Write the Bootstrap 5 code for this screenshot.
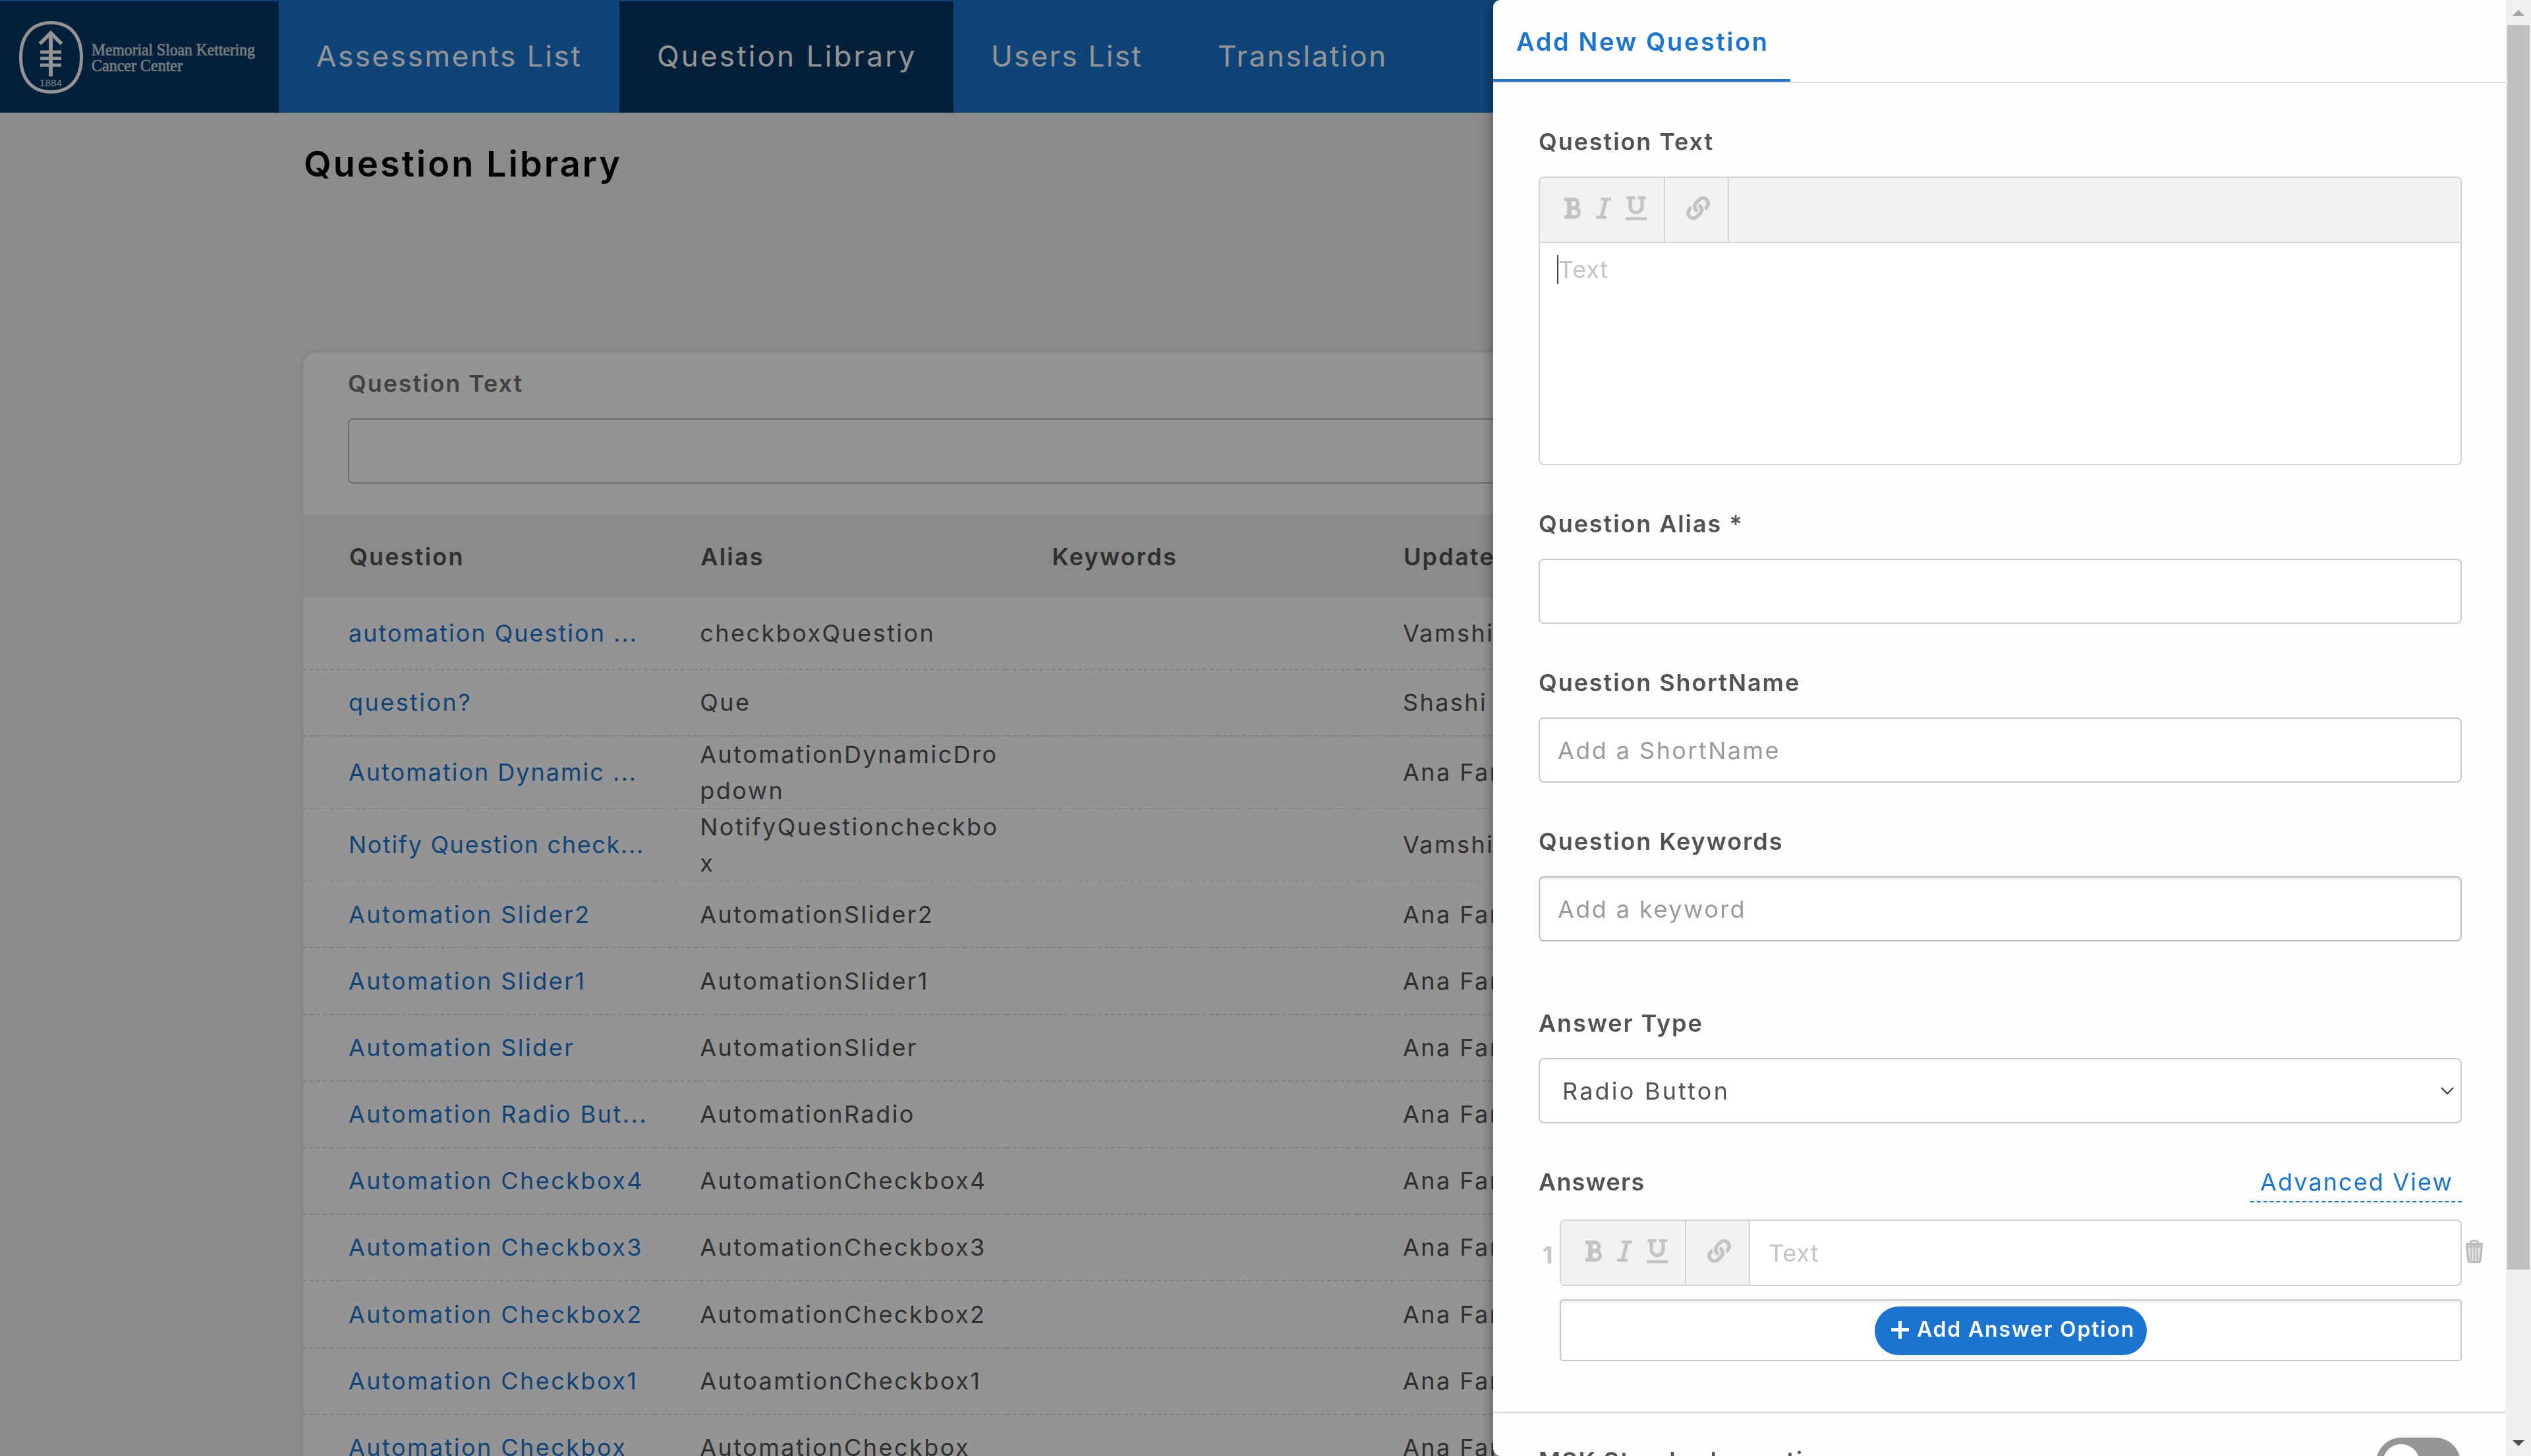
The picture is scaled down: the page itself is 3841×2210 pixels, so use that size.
<!DOCTYPE html>
<html lang="en">
<head>
<meta charset="utf-8">
<title>Question Library</title>
<link href="https://cdn.jsdelivr.net/npm/bootstrap@5.3.0/dist/css/bootstrap.min.css" rel="stylesheet">
<style>
  html, body { height: 100%; }
  body { font-family: Inter, "Open Sans", sans-serif; font-size: 36px; line-height: 54px; letter-spacing: 2.45px; color: #525252; background: #f0f0f0; overflow: hidden; }
  a { color: #1b75d0; text-decoration: none; }

  .topbar { height: 171px; background: #1b75d0; padding: 2px 0 0; }
  .topbar .brand-box { width: 423px; background: #053863; }
  .topbar .nav-link { font-size: 44px; letter-spacing: 2.6px; color: #fff; padding: 0 0 3px 57px; display: flex; align-items: center; white-space: nowrap; }
  .topbar .nav-link.active { background: #053863; letter-spacing: 3.15px; }
  .w-assess { width: 517px; } .w-question { width: 507px; } .w-users { width: 344px; }
  .topbar .nav-link.w-users { letter-spacing: 2.3px; }

  .page-title { font-size: 54px; line-height: 64px; font-weight: 600; letter-spacing: 3.1px; color: #000; margin: 46px 0 0 461px; }
  .library { margin: 254px 0 0 460px; width: 2920px; border: 0; border-radius: 20px; overflow: hidden; box-shadow: 0 0 8px rgba(0,0,0,.12); }
  .library .filter { height: 246px; padding: 20px 68px 0; }
  .library .filter .form-label { color: #727272; }
  .library .form-control { border-color: #bebebe; }
  .qrow { display: grid; grid-template-columns: repeat(4, 533.3px); height: 101.2px; background: #fff; }
  .qrow > div { display: flex; align-items: center; padding-left: 69px; border-bottom: 2px dashed #dbdbdb; white-space: nowrap; line-height: 54.5px; }
  .qrow.tall { height: 110px; }
  .qrow.qhead { height: 126px; background: #f0f0f0; font-weight: 600; letter-spacing: 2.2px; }
  .qrow.qhead > div { border: 0; padding-left: 70px; padding-top: 2px; }
  .cut { letter-spacing: 2px; }
  .cut-long { letter-spacing: 1.65px; }

  .form-label { display: block; font-weight: 600; letter-spacing: 1.9px; margin: 0 0 26px; color: #525252; }
  .form-control, .form-select { height: 99px; border: 2px solid #cacaca; border-radius: 8px; font-size: 36px; letter-spacing: 2.45px; padding: 0 27px; color: #525252; background-color: #fff; }
  .form-control::placeholder { color: #9a9a9a; opacity: 1; }
  .form-select { padding: 0 34px; letter-spacing: 3.2px;
    background-image: url("data:image/svg+xml,%3Csvg xmlns='http://www.w3.org/2000/svg' viewBox='0 0 20 12'%3E%3Cpath d='M1 1l9 9 9-9' fill='none' stroke='%23444' stroke-width='2.4'/%3E%3C/svg%3E");
    background-size: 20px 12px; background-position: right 10px center; }
  .field { margin-bottom: 62px; }
  .field-wide { margin-bottom: 97px; }
  .inset { border-color: #bdbdbd; box-shadow: inset 0 2px 4px rgba(0,0,0,.09); }

  .offcanvas-backdrop.show { opacity: .42; }
  .offcanvas.drawer { width: 1575px; border: 0; flex-direction: row; background: #fefefe; border-radius: 11px 0 0 12px; overflow: hidden; box-shadow: 0 0 22px rgba(0,0,0,.45); color: #525252; transition: none; }
  .drawer-main { width: 1537px; }
  .drawer-head { height: 126px; border-bottom: 2px solid #dcdcdc; }
  .drawer-tab { width: 451px; height: 124px; border-bottom: 4px solid #1b75d0; color: #1b75d0; font-size: 38px; font-weight: 600; letter-spacing: 2.6px; padding: 0 0 0 35px; line-height: 126px; white-space: nowrap; }
  .drawer-body { padding: 62px 67px 0 69px; height: 2019px; border-bottom: 2px solid #d8d8d8; }

  .editor { border: 2px solid #d4d4cc; border-radius: 8px; overflow: hidden; background: #fff; color: #c3c3c3; }
  .editor .tools { background: #f1f1f1; }
  .tools .tool-set { width: 190px; border-right: 2px solid #d4d4cc; padding: 0 0 5px 37px; }
  .tools .tool-link { width: 97px; padding-left: 32px; }
  .tools svg { flex: none; display: block; }
  .gap-i { margin-left: 22px; }
  .editor-big .tools { height: 99px; border-bottom: 2px solid #d4d4cc; }
  .editor-big { height: 438px; }
  .typing { margin: 18px 0 0 26px; height: 44px; line-height: 44px; border-left: 2px solid #444; letter-spacing: .8px; width: max-content; }
  .editor-line { height: 101px; width: 1369px; flex: none; }
  .editor-line .hint { padding-left: 28px; letter-spacing: .9px; }
  .adv-row { margin-bottom: 26px; }
  .adv-row .form-label { margin: 0; letter-spacing: 1.2px; }
  .adv-link { border-bottom: 2px dashed #1b75d0; height: 58px; padding: 0 13px 0 15px; letter-spacing: 2.1px; }
  .idx { width: 32px; padding: 6px 0 0 6px; color: #c4c4c4; font-weight: 700; letter-spacing: 0; }
  .trash { margin: 0 0 4px 5px; }
  .add-box { height: 94px; margin: 20px 0 0 32px; border: 2px solid #cacaca; border-radius: 5px; box-shadow: inset 0 2px 4px rgba(0,0,0,.1); padding: 9px 0 0 476px; background: #fff; }
  .btn-add { width: 413px; height: 74px; border-radius: 37px; background: #1b75d0; color: #fff; font-size: 32px; font-weight: 600; letter-spacing: 1.8px; padding: 0 0 4px 25px; border: 0; gap: 12px; white-space: nowrap; }
  .drawer-foot { padding: 45px 69px 0 69px; }
  .drawer-foot .form-label { margin-bottom: 0; }
  .switch-off { width: 128px; height: 76px; margin-top: -8px; border-radius: 38px; background: #969696; padding: 10px; }
  .switch-off i { display: block; width: 56px; height: 56px; border-radius: 50%; background: #fff; }

  .rail { width: 38px; background: #f0f0f0; padding: 15px 2px 0; }
  .rail .thumb { height: 1889px; margin: 14px 0 259px; background: #c1c1c1; }
  .rail svg { display: block; margin-left: 8px; }
</style>
</head>
<body>
<svg class="d-none" xmlns="http://www.w3.org/2000/svg">
  <symbol id="ic-bold" viewBox="0 0 26 32"><g fill="none" stroke="#c3c3c3" stroke-width="5.4"><path d="M0 2.7H14.5a5.9 5.9 0 0 1 0 12.4H8"/><path d="M8 16.1h7.8a6.6 6.6 0 0 1 0 13.2H0"/><path d="M7.4 2V30" stroke-width="7"/></g></symbol>
  <symbol id="ic-italic" viewBox="0 0 23 32"><g fill="none" stroke="#c3c3c3"><path d="M7.5 2.3H23M0 29.7H16" stroke-width="4.6"/><path d="M15.2 2.5L8.3 29.5" stroke-width="5.2"/></g></symbol>
  <symbol id="ic-underline" viewBox="0 0 32 37"><g fill="none" stroke="#c3c3c3"><path d="M1.5 2.3H14.5M18.5 2.3H31M0 34H32" stroke-width="4.6"/><path d="M7 2V15.5a9 9 0 0 0 18 0V2" stroke-width="5.4"/></g></symbol>
  <symbol id="ic-link" viewBox="0 0 512 512"><path fill="#c3c3c3" d="M326.612 185.391c59.747 59.809 58.927 155.698.36 214.59-.11.12-.24.25-.36.37l-67.2 67.2c-59.27 59.27-155.699 59.262-214.96 0-59.27-59.26-59.27-155.7 0-214.96l37.106-37.106c9.84-9.84 26.786-3.3 27.294 10.606.648 17.722 3.826 35.527 9.69 52.721 1.986 5.822.567 12.262-3.783 16.612l-13.087 13.087c-28.026 28.026-28.905 73.66-1.155 101.96 28.024 28.579 74.086 28.749 102.325.51l67.2-67.19c28.191-28.191 28.073-73.757 0-101.83-3.701-3.694-7.429-6.564-10.341-8.569a16.037 16.037 0 0 1-6.947-12.606c-.396-10.567 3.348-21.456 11.698-29.806l21.054-21.055c5.521-5.521 14.182-6.199 20.584-1.731a152.482 152.482 0 0 1 20.522 17.197zM467.547 44.449c-59.261-59.262-155.69-59.27-214.96 0l-67.2 67.2c-.12.12-.25.25-.36.37-58.566 58.892-59.387 154.781.36 214.59a152.454 152.454 0 0 0 20.521 17.196c6.402 4.468 15.064 3.789 20.584-1.731l21.054-21.055c8.35-8.35 12.094-19.239 11.698-29.806a16.037 16.037 0 0 0-6.947-12.606c-2.912-2.005-6.64-4.875-10.341-8.569-28.073-28.073-28.191-73.639 0-101.83l67.2-67.19c28.239-28.239 74.3-28.069 102.325.51 27.75 28.3 26.872 73.934-1.155 101.96l-13.087 13.087c-4.35 4.35-5.769 10.79-3.783 16.612 5.864 17.194 9.042 34.999 9.69 52.721.509 13.906 17.454 20.446 27.294 10.606l37.106-37.106c59.271-59.259 59.271-155.699.001-214.959z"/></symbol>
</svg>

<nav class="topbar d-flex align-items-stretch">
  <a class="brand-box" href="#">
    <svg width="423" height="169" viewBox="0 2 423 169" xmlns="http://www.w3.org/2000/svg">
      <g fill="none" stroke="#fff">
        <path d="M77.5 34.5C108 34.5 123.5 56 123.5 87S108 139.500 77.500 139.500 31.500 118 31.500 87 47 34.500 77.500 34.500Z" stroke-width="5"/>
        <path d="M77 51V116" stroke-width="6"/>
        <path d="M60.500 66.500L77 50L93.500 66.500" stroke-width="5.500"/>
        <path d="M61 79H93M61 88.700H93M61 99H93" stroke-width="4.800"/>
      </g>
      <g fill="#fff" opacity=".8" letter-spacing="0">
        <text x="60" y="130.500" font-family="Liberation Sans" font-size="15" textLength="34">1884</text>
        <text x="139" y="84" font-family="Liberation Serif" font-size="26" textLength="248" lengthAdjust="spacingAndGlyphs" stroke="#fff" stroke-width=".7">Memorial Sloan Kettering</text>
        <text x="139" y="108" font-family="Liberation Serif" font-size="26" textLength="138" lengthAdjust="spacingAndGlyphs" stroke="#fff" stroke-width=".7">Cancer Center</text>
      </g>
    </svg>
  </a>
  <a class="nav-link w-assess" href="#">Assessments List</a>
  <a class="nav-link active w-question" href="#">Question Library</a>
  <a class="nav-link w-users" href="#">Users List</a>
  <a class="nav-link" href="#">Translation</a>
</nav>

<h1 class="page-title">Question Library</h1>

<div class="card library">
  <div class="filter">
    <label class="form-label">Question Text</label>
    <input class="form-control" type="text">
  </div>
  <div class="qrow qhead"><div>Question</div><div>Alias</div><div>Keywords</div><div>Updated By</div></div>
  <div class="qrow tall"><div><a class="cut" href="#">automation Question ...</a></div><div>checkboxQuestion</div><div></div><div>Vamshi</div></div>
  <div class="qrow"><div><a href="#">question?</a></div><div>Que</div><div></div><div>Shashi K</div></div>
  <div class="qrow tall"><div><a class="cut" href="#">Automation Dynamic ...</a></div><div>AutomationDynamicDro<br>pdown</div><div></div><div>Ana Farr</div></div>
  <div class="qrow tall"><div><a class="cut-long" href="#">Notify Question check...</a></div><div>NotifyQuestioncheckbo<br>x</div><div></div><div>Vamshi</div></div>
  <div class="qrow"><div><a href="#">Automation Slider2</a></div><div>AutomationSlider2</div><div></div><div>Ana Farr</div></div>
  <div class="qrow"><div><a href="#">Automation Slider1</a></div><div>AutomationSlider1</div><div></div><div>Ana Farr</div></div>
  <div class="qrow"><div><a href="#">Automation Slider</a></div><div>AutomationSlider</div><div></div><div>Ana Farr</div></div>
  <div class="qrow"><div><a href="#">Automation Radio But...</a></div><div>AutomationRadio</div><div></div><div>Ana Farr</div></div>
  <div class="qrow"><div><a href="#">Automation Checkbox4</a></div><div>AutomationCheckbox4</div><div></div><div>Ana Farr</div></div>
  <div class="qrow"><div><a href="#">Automation Checkbox3</a></div><div>AutomationCheckbox3</div><div></div><div>Ana Farr</div></div>
  <div class="qrow"><div><a href="#">Automation Checkbox2</a></div><div>AutomationCheckbox2</div><div></div><div>Ana Farr</div></div>
  <div class="qrow"><div><a href="#">Automation Checkbox1</a></div><div>AutoamtionCheckbox1</div><div></div><div>Ana Farr</div></div>
  <div class="qrow"><div><a href="#">Automation Checkbox</a></div><div>AutomationCheckbox</div><div></div><div>Ana Farr</div></div>
</div>

<div class="offcanvas-backdrop show"></div>

<div class="offcanvas offcanvas-end show drawer" tabindex="-1" data-bs-backdrop="false" data-bs-scroll="true">
  <div class="drawer-main">
    <div class="drawer-head"><div class="drawer-tab">Add New Question</div></div>
    <div class="drawer-body">
      <label class="form-label">Question Text</label>
      <div class="editor editor-big field">
        <div class="tools d-flex">
          <div class="tool-set d-flex align-items-center">
            <svg width="26" height="32"><use href="#ic-bold"/></svg>
            <svg class="gap-i" width="23" height="32"><use href="#ic-italic"/></svg>
            <svg class="gap-i" width="32" height="37"><use href="#ic-underline"/></svg>
          </div>
          <div class="tool-set tool-link d-flex align-items-center"><svg width="36" height="36"><use href="#ic-link"/></svg></div>
        </div>
        <div class="typing">Text</div>
      </div>

      <div class="field"><label class="form-label">Question Alias *</label><input class="form-control" type="text"></div>
      <div class="field"><label class="form-label">Question ShortName</label><input class="form-control" type="text" placeholder="Add a ShortName"></div>
      <div class="field-wide"><label class="form-label">Question Keywords</label><input class="form-control inset" type="text" placeholder="Add a keyword"></div>
      <div class="field"><label class="form-label">Answer Type</label><select class="form-select"><option>Radio Button</option></select></div>

      <div class="adv-row d-flex justify-content-between align-items-start">
        <label class="form-label">Answers</label>
        <a class="adv-link" href="#">Advanced View</a>
      </div>
      <div class="d-flex align-items-center">
        <div class="idx flex-shrink-0">1</div>
        <div class="editor editor-line d-flex align-items-stretch">
          <div class="tools d-flex">
            <div class="tool-set d-flex align-items-center">
              <svg width="26" height="32"><use href="#ic-bold"/></svg>
              <svg class="gap-i" width="23" height="32"><use href="#ic-italic"/></svg>
              <svg class="gap-i" width="32" height="37"><use href="#ic-underline"/></svg>
            </div>
            <div class="tool-set tool-link d-flex align-items-center"><svg width="36" height="36"><use href="#ic-link"/></svg></div>
          </div>
          <div class="hint d-flex align-items-center">Text</div>
        </div>
        <svg class="trash flex-shrink-0" width="28" height="35" viewBox="0 0 28 35">
          <g fill="none" stroke="#b9b9b9"><path d="M8.500 5V3.500a2 2 0 0 1 2-2h7a2 2 0 0 1 2 2V5" stroke-width="2.600"/><path d="M1 6.500H27" stroke-width="3.500"/><path d="M2.800 10L5 31.500a2 2 0 0 0 2 1.800H21a2 2 0 0 0 2-1.800L25.200 10Z" stroke-width="3.200" fill="#e4e4e4"/><path d="M9.500 11V31M14 11V31M18.500 11V31" stroke-width="2"/></g>
          <path d="M1 8.500H27" stroke="#cfcfcf" stroke-width="1.500"/>
        </svg>
      </div>
      <div class="add-box">
        <button class="btn btn-add d-flex align-items-center" type="button">
          <svg width="27" height="27" viewBox="0 0 27 27"><path d="M13.500 0V27M0 13.500H27" stroke="#fff" stroke-width="5"/></svg>Add Answer Option
        </button>
      </div>
    </div>
    <div class="drawer-foot d-flex justify-content-between align-items-start">
      <label class="form-label">MSK Standard question</label>
      <div class="switch-off"><i></i></div>
    </div>
  </div>
  <div class="rail">
    <svg width="18" height="9" viewBox="0 0 18 9"><path d="M0 9L9 0L18 9Z" fill="#a3a3a3"/></svg>
    <div class="thumb"></div>
    <svg width="18" height="9" viewBox="0 0 18 9"><path d="M0 0H18L9 9Z" fill="#505050"/></svg>
  </div>
</div>
<script src="https://cdn.jsdelivr.net/npm/bootstrap@5.3.0/dist/js/bootstrap.bundle.min.js"></script>
</body>
</html>
